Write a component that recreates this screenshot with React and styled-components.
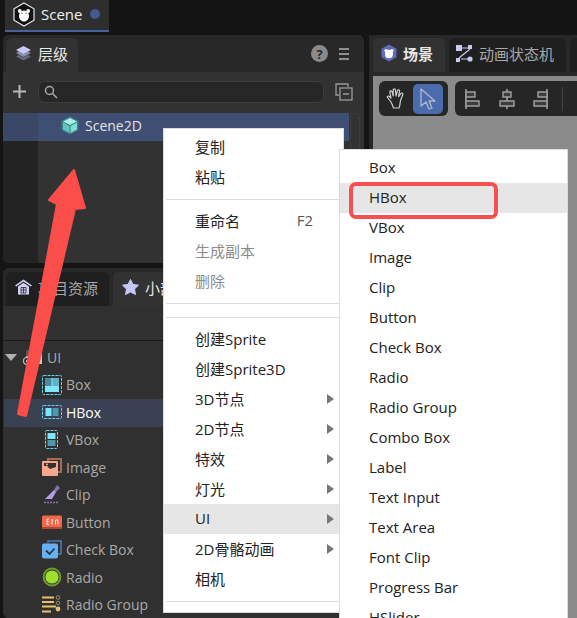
import styled, { createGlobalStyle } from "styled-components";

const Global = createGlobalStyle`
    html, body { margin: 0; padding: 0; background: #141414; overflow: hidden; }
    body { font-family: "Open Sans", "Noto Sans CJK SC", sans-serif; }
`;

const Page = styled.div`
    position: relative;
    width: 577px;
    height: 618px;
    overflow: hidden;
    background: #141414;
`;
const TopBar = styled.div`
    display: flex;
    height: 35px;
    padding-left: 5px;
`;
const SceneTab = styled.div`
    width: 104px;
    height: 32px;
    box-sizing: border-box;
    display: flex;
    align-items: center;
    padding: 0 0 2px 8px;
    gap: 6px;
    background: #2e2e2e;
    border-bottom: 2px solid #46629a;
    color: #f0f0f0;
    font-size: 15px;
`;
const Dot = styled.span`
    width: 10px;
    height: 10px;
    margin-left: 2px;
    border-radius: 50%;
    background: #45598f;
`;
const Columns = styled.div`
    display: flex;
    height: 583px;
    padding-left: 3px;
    gap: 5px;
`;
const LeftColumn = styled.div`
    width: 361px;
    display: flex;
    flex-direction: column;
    gap: 5px;
`;
const Panel = styled.div`
    background: #303030;
    border-radius: 6px;
    overflow: hidden;
    height: ${(p) => p.$h}px;
    display: flex;
    flex-direction: column;
    flex: ${(p) => (p.$h ? "none" : 1)};
`;
const TabStrip = styled.div`
    height: ${(p) => p.$h || 37}px;
    padding-left: ${(p) => p.$pad}px;
    display: flex;
    align-items: flex-end;
    gap: 4px;
    background: #282828;
    flex: none;
`;
const Tab = styled.div`
    height: 34px;
    box-sizing: border-box;
    width: ${(p) => p.$w}px;
    padding: 0 0 4px ${(p) => p.$pad || 8}px;
    display: flex;
    align-items: center;
    gap: 6px;
    border-radius: 6px 6px 0 0;
    background: ${(p) => (p.$active ? "#323232" : "#1f1f1f")};
    color: ${(p) => (p.$active ? "#e8e8e8" : "#a8a8a8")};
    font-size: 15px;
    font-weight: ${(p) => (p.$bold ? 700 : 400)};
    white-space: nowrap;
    overflow: hidden;
    flex: none;
`;
const TabEnd = styled.div`
    margin-left: auto;
    height: 37px;
    display: flex;
    align-items: center;
    gap: 11px;
    padding-right: 15px;
`;
const Help = styled.span`
    width: 17px;
    height: 17px;
    border-radius: 50%;
    background: #8a8a8a;
    color: #2b2b2b;
    font-size: 13px;
    font-weight: 700;
    display: flex;
    align-items: center;
    justify-content: center;
`;
const SearchRow = styled.div`
    height: 41px;
    box-sizing: border-box;
    display: flex;
    align-items: center;
    background: #323232;
    padding: 0 9px 2px 9px;
    flex: none;
`;
const SearchBox = styled.div`
    width: 286px;
    height: 22px;
    margin-left: 11px;
    margin-right: 11px;
    box-sizing: border-box;
    border: 1px solid #3d3d3d;
    border-radius: 7px;
    background: #272727;
    display: flex;
    align-items: center;
    padding-left: 5px;
`;
const HierarchyBody = styled.div`
    flex: 1;
    display: grid;
    grid-template-columns: 35px 1fr;
    background: #323232;
`;
const Gutter = styled.div`
    background: #232323;
`;
const SelectedArea = styled.div`
    display: flex;
    align-items: flex-start;
    gap: 1px;
`;
const SelectedRow = styled.div`
    position: relative;
    flex: 1;
    height: 28px;
    box-sizing: border-box;
    margin-left: -35px;
    padding: 0 0 3px 57px;
    display: flex;
    align-items: center;
    gap: 5px;
    background: linear-gradient(90deg, #3a4766 35px, #3f4e73 35px);
    color: #e4e4e4;
    font-size: 14px;
`;
const ScrollTrack = styled.div`
    width: 8px;
    height: 100px;
    margin-right: 4px;
    border: 1px solid #3c3c3c;
    border-radius: 4px;
`;
const AssetHeader = styled.div`
    height: 34px;
    background: #303030;
    border-bottom: 1px solid #1c1c1c;
    flex: none;
`;
const Tree = styled.div`
    flex: 1;
    background: #303030;
    padding-top: 3px;
`;
const TreeRow = styled.div`
    height: 27.5px;
    box-sizing: border-box;
    display: flex;
    align-items: center;
    margin-left: 1px;
    padding: 0 0 1px ${(p) => p.$indent}px;
    gap: 4px;
    font-size: 14px;
    color: ${(p) => (p.$active ? "#ffffff" : "#a9a9a9")};
    font-weight: ${(p) => (p.$active ? 500 : 400)};
    background: ${(p) => (p.$active ? "#394152" : "transparent")};
`;
const Caret = styled.span`
    width: 0;
    height: 0;
    margin-right: 1px;
    border-left: 6px solid transparent;
    border-right: 6px solid transparent;
    border-top: 7px solid #b0b0b0;
`;
const RightColumn = styled.div`
    flex: 1;
    min-width: 0;
    display: flex;
    flex-direction: column;
    background: #282828;
    border-radius: 6px 0 0 0;
`;
const Viewport = styled.div`
    flex: 1;
    margin: 4px 0 0 4px;
    background: #8a8a8a;
    padding: 5px 0 0 6px;
    display: flex;
    gap: 7px;
    align-items: flex-start;
`;
const ToolGroup = styled.div`
    height: 35px;
    box-sizing: border-box;
    display: flex;
    align-items: center;
    padding: 2px ${(p) => (p.$spread ? 3 : 2)}px;
    gap: ${(p) => (p.$spread ? 3.5 : 2)}px;
    background: #262626;
    border-radius: 6px;
    flex: none;
    width: ${(p) => p.$w}px;
`;
const ToolButton = styled.div`
    width: 30px;
    height: 30px;
    display: flex;
    align-items: center;
    justify-content: center;
    border-radius: 5px;
    background: ${(p) => (p.$on ? "#4a6bad" : "transparent")};
`;
const ToolRule = styled.span`
    width: 1px;
    height: 24px;
    margin-left: 3px;
    background: #444;
`;
const Menu = styled.div`
    position: absolute;
    left: ${(p) => p.$x}px;
    top: ${(p) => p.$y}px;
    width: ${(p) => p.$w}px;
    box-sizing: border-box;
    display: flex;
    flex-direction: column;
    padding: 3px 0 4px;
    background: #ffffff;
    border: 1px solid #dcdcdc;
    color: #222;
    font-size: 15px;
`;
const MenuRow = styled.div`
    height: 30px;
    flex: none;
    box-sizing: border-box;
    display: flex;
    align-items: center;
    justify-content: space-between;
    padding: 0 9px 2px ${(p) => p.$pad}px;
    background: ${(p) => (p.$hover ? "#e6e6e6" : "transparent")};
    color: ${(p) => (p.$off ? "#8c8c8c" : "#222")};
`;
const Sep = styled.div`
    height: 1px;
    flex: none;
    margin: 7px 0 6px 2px;
    background: #dcdcdc;
`;
const Arrowhead = styled.span`
    width: 0;
    height: 0;
    margin-top: 2px;
    border-top: 5px solid transparent;
    border-bottom: 5px solid transparent;
    border-left: 7px solid #777;
`;
const Hint = styled.span`
    color: #555;
    margin-right: 21px;
`;
const RedBox = styled.div`
    position: absolute;
    left: 349px;
    top: 182px;
    width: 149px;
    height: 37px;
    box-sizing: border-box;
    border: 4px solid #f85050;
    border-radius: 7px;
`;
const ArrowArt = styled.svg`
    position: absolute;
    left: 0;
    top: 150px;
`;

const LogoIcon = () => (
    <svg width="22" height="25" viewBox="0 0 22 25">
        <path d="M11 1 L21 6.8 V18.2 L11 24 L1 18.2 V6.8 Z" fill="#111" stroke="#e8e8e8" strokeWidth="1.2" />
        <circle cx="6.8" cy="9" r="1.9" fill="#fff" />
        <circle cx="15.2" cy="9" r="1.9" fill="#fff" />
        <ellipse cx="11" cy="14" rx="5" ry="5.6" fill="#fff" />
        <circle cx="9" cy="11" r="0.6" fill="#111" />
        <circle cx="13" cy="11" r="0.6" fill="#111" />
    </svg>
);
const LayersIcon = () => (
    <svg width="17" height="17" viewBox="0 0 17 17">
        <path d="M1 11.5 L8.5 15.5 L16 11.5 L13 10 L8.5 12.5 L4 10 Z" fill="#666a80" />
        <path d="M1 8 L8.5 12 L16 8 L13 6.5 L8.5 9 L4 6.5 Z" fill="#8d90b0" />
        <path d="M8.5 1 L16 5 L8.5 9 L1 5 Z" fill="#c6c9f5" />
    </svg>
);
const PlusIcon = () => (
    <svg width="15" height="15" viewBox="0 0 15 15">
        <path d="M7.5 1 V14 M1 7.5 H14" stroke="#b8b8b8" strokeWidth="2" />
    </svg>
);
const SearchIcon = () => (
    <svg width="14" height="14" viewBox="0 0 14 14" fill="none" stroke="#a8a8a8" strokeWidth="1.5">
        <circle cx="5.5" cy="5.5" r="4" />
        <path d="M8.5 8.5 L13 13" />
    </svg>
);
const CopyIcon = () => (
    <svg width="18" height="18" viewBox="0 0 18 18" fill="none" stroke="#9a9a9a" strokeWidth="1.3">
        <path d="M4 12 H1 V1 H13 V4" />
        <rect x="5" y="5" width="12" height="12" />
        <path d="M8 11 H14" />
    </svg>
);
const MenuLines = () => (
    <svg width="10" height="12" viewBox="0 0 10 12">
        <path d="M0 1 H10 M0 6 H10 M0 11 H10" stroke="#b0b0b0" strokeWidth="1.4" />
    </svg>
);
const CubeIcon = () => (
    <svg width="20" height="19" viewBox="0 0 20 19">
        <path d="M10 0.5 L18.5 5 V14 L10 18.5 L1.5 14 V5 Z" fill="#3f7f86" />
        <path d="M10 2 L17 5.5 L10 9 L3 5.5 Z" fill="#a8efe8" />
        <path d="M3 6.5 L9.5 10 V17 L3 13.5 Z" fill="#5fc6c0" />
        <path d="M17 6.5 L10.5 10 V17 L17 13.5 Z" fill="#7fdcd6" />
    </svg>
);
const SceneBadge = () => (
    <svg width="16" height="18" viewBox="0 0 16 18">
        <path d="M8 0.5 L15.5 4.7 V13.3 L8 17.5 L0.5 13.3 V4.7 Z" fill="#5f6db8" />
        <circle cx="5" cy="6.5" r="1.6" fill="#fff" />
        <circle cx="11" cy="6.5" r="1.6" fill="#fff" />
        <ellipse cx="8" cy="10" rx="4" ry="4.2" fill="#fff" />
    </svg>
);
const GraphIcon = () => (
    <svg width="17" height="17" viewBox="0 0 17 17">
        <path d="M5 3 H12 M14 4 L3 13 M5 14 H12" stroke="#c8cbf0" strokeWidth="1.2" fill="none" />
        <rect x="0" y="0" width="6" height="6" fill="#c8cbf0" />
        <rect x="12" y="0" width="4" height="4" fill="#c8cbf0" />
        <rect x="0" y="13" width="4" height="4" fill="#c8cbf0" />
        <circle cx="14" cy="14" r="2.6" fill="#c8cbf0" />
    </svg>
);
const HandIcon = () => (
    <svg width="20" height="21" viewBox="0 0 20 21" fill="none" stroke="#cfcfcf" strokeWidth="1.2" strokeLinejoin="round">
        <path d="M5 14 L1.5 9.5 C0.8 8.3 2.6 7.5 3.4 8.5 L5 10 L3.8 4 C3.6 2.6 5.6 2.3 6 3.6 L7.2 8 L7.2 2 C7.2 0.6 9.4 0.6 9.5 2 L10 8 L11.5 2.6 C12 1.3 13.8 1.8 13.6 3.2 L12.6 8.6 L15 5.4 C15.9 4.5 17.4 5.4 16.8 6.6 L14.4 13 C14 16 14 18 13 20 H7.5 C6.8 18 6 16 5 14 Z" />
    </svg>
);
const PointerIcon = () => (
    <svg width="16" height="22" viewBox="0 0 16 22" fill="none" stroke="#b4b9c6" strokeWidth="1.3" strokeLinejoin="round">
        <path d="M1 1 L15 13 L9 13 L12 20 L9 21 L6 14 L1 18 Z" />
    </svg>
);
const AlignIcon = ({ line, boxes }) => (
    <svg width="16" height="20" viewBox="0 0 16 20">
        <path d={line} stroke="#a0a0a0" strokeWidth="1.6" fill="none" />
        <path d={boxes} stroke="#a0a0a0" strokeWidth="1.4" fill="#3c3c3c" />
    </svg>
);
const HomeIcon = () => (
    <svg width="17" height="16" viewBox="0 0 17 16">
        <path d="M8.5 0.5 L17 6.5 L15.8 7.6 L8.5 2.6 L1.2 7.6 L0 6.5 Z" fill="#cfd2f5" />
        <path d="M3 7.5 L8.5 3.8 L14 7.5 V15.5 H3 Z" fill="#cfd2f5" />
        <path d="M6 8.5 H11 V14 H6 Z M8.5 8.5 V14 M6 11 H11" stroke="#333" strokeWidth="0.9" fill="none" />
    </svg>
);
const StarIcon = () => (
    <svg width="17" height="16" viewBox="0 0 17 16">
        <path d="M8.5 0.5 L11 5.4 L16.5 6.2 L12.5 10 L13.5 15.5 L8.5 13 L3.5 15.5 L4.5 10 L0.5 6.2 L6 5.4 Z" fill="#c4c7f8" stroke="#c4c7f8" strokeLinejoin="round" />
    </svg>
);
const FolderIcon = () => (
    <svg width="21" height="17" viewBox="0 0 21 17">
        <rect x="4" y="1" width="16" height="14" fill="#c9c9c9" />
        <rect x="4" y="1" width="7" height="6" fill="#555" />
        <circle cx="5" cy="12" r="3.6" fill="#303030" stroke="#bbb" strokeWidth="1.2" />
        <circle cx="5" cy="12" r="1.2" fill="#bbb" />
    </svg>
);

const BoxIcon = () => (
    <svg width="20" height="20" viewBox="0 0 20 20">
        <rect x="0.5" y="0.5" width="19" height="19" rx="1" fill="none" stroke="#67d0e6" strokeDasharray="3 1" />
        <rect x="3" y="3" width="14" height="14" fill="#7ee6fa" />
        <rect x="3" y="3" width="6.5" height="8" fill="#4f8a9c" />
        <rect x="10.5" y="3" width="6.5" height="8" fill="#5fb4c8" />
    </svg>
);
const HBoxIcon = () => (
    <svg width="20" height="14" viewBox="0 0 20 14">
        <rect x="0.5" y="0.5" width="19" height="13" rx="1" fill="none" stroke="#67d0e6" strokeDasharray="3 1" />
        <rect x="3.5" y="3" width="6" height="8" fill="#7ee6fa" />
        <rect x="10.5" y="3" width="6" height="8" fill="#4f97ae" />
    </svg>
);
const VBoxIcon = () => (
    <svg width="20" height="19" viewBox="0 0 20 19">
        <rect x="3.5" y="0.5" width="12" height="18" rx="1" fill="none" stroke="#67d0e6" strokeDasharray="3 1" />
        <rect x="5.5" y="3" width="8" height="6" fill="#7ee6fa" />
        <rect x="5.5" y="10" width="8" height="6" fill="#4f97ae" />
    </svg>
);
const ImageIcon = () => (
    <svg width="20" height="19" viewBox="0 0 20 19">
        <path d="M6 3 V1 H19 V14 H16" fill="none" stroke="#a86a58" strokeWidth="2" />
        <rect x="0" y="3" width="16" height="15" rx="1" fill="#f7a78f" />
        <path d="M2 5 H14 V9 L8 11 L5 8 H2 Z" fill="#3a2e2c" />
        <circle cx="5" cy="6.5" r="1" fill="#f7a78f" />
    </svg>
);
const ClipIcon = () => (
    <svg width="20" height="19" viewBox="0 0 20 19">
        <path d="M15 0 L18 3 L14 7 L12 5 Z" fill="#8674b4" />
        <path d="M12 5 L14 7 L10 14 H3 Z" fill="#b4a0ea" />
        <path d="M2 17.5 H17" stroke="#8674b4" strokeWidth="1.6" strokeDasharray="2 1" />
    </svg>
);
const ButtonIcon = () => (
    <svg width="20" height="14" viewBox="0 0 20 14">
        <rect x="0" y="0.5" width="20" height="13" rx="1.5" fill="#f2664a" />
        <rect x="0" y="12" width="20" height="2" fill="#b04a36" />
        <path d="M5 4 V9.5 M5 4 H7 M5 6.7 H7 M5 9.5 H7 M10 4 V9.5 M9 5 H11.5 M13.5 9.5 V5 H16 V9.5" stroke="#ffe4dc" strokeWidth="1" fill="none" />
    </svg>
);
const CheckIcon = () => (
    <svg width="20" height="19" viewBox="0 0 20 19">
        <path d="M6 3 V1 H19 V14 H16" fill="none" stroke="#4b7ab0" strokeWidth="1.6" />
        <rect x="0" y="3.5" width="16" height="15" rx="2" fill="#69b0f2" />
        <path d="M4 10.5 L7.5 14 L12.5 8.5" fill="none" stroke="#24344a" strokeWidth="1.8" />
    </svg>
);
const RadioIcon = () => (
    <svg width="20" height="20" viewBox="0 0 20 20">
        <circle cx="10" cy="10" r="8.4" fill="none" stroke="#6f9a2e" strokeWidth="2" />
        <circle cx="10" cy="10" r="6.6" fill="#9ee02f" />
    </svg>
);
const RadioGroupIcon = () => (
    <svg width="20" height="20" viewBox="0 0 20 20">
        <path d="M0 2.5 H12 M0 7 H12 M0 11.5 H14 M0 16.5 H9" stroke="#e8c070" strokeWidth="2" />
        <circle cx="16" cy="2.5" r="1.8" fill="none" stroke="#a08c60" />
        <circle cx="16" cy="8" r="1.8" fill="none" stroke="#a08c60" />
        <circle cx="16" cy="14" r="2.4" fill="#e8c070" />
    </svg>
);

const treeItems = [
    ["Box", BoxIcon],
    ["HBox", HBoxIcon, true],
    ["VBox", VBoxIcon],
    ["Image", ImageIcon],
    ["Clip", ClipIcon],
    ["Button", ButtonIcon],
    ["Check Box", CheckIcon],
    ["Radio", RadioIcon],
    ["Radio Group", RadioGroupIcon],
];

const uiItems = ["Box", "HBox", "VBox", "Image", "Clip", "Button", "Check Box", "Radio", "Radio Group", "Combo Box", "Label", "Text Input", "Text Area", "Font Clip", "Progress Bar", "HSlider"];

const submenu = [
    ["3D节点"],
    ["2D节点"],
    ["特效"],
    ["灯光"],
    ["UI", true],
    ["2D骨骼动画"],
];

const App = () => {
    return (
        <Page>
            <Global />
            <TopBar>
                <SceneTab>
                    <LogoIcon />
                    Scene
                    <Dot />
                </SceneTab>
            </TopBar>
            <Columns>
                <LeftColumn>
                    <Panel $h={228}>
                        <TabStrip $pad={3}>
                            <Tab $w={72} $active $pad={9}><LayersIcon />层级</Tab>
                            <TabEnd><Help>?</Help><MenuLines /></TabEnd>
                        </TabStrip>
                        <SearchRow>
                            <PlusIcon />
                            <SearchBox><SearchIcon /></SearchBox>
                            <CopyIcon />
                        </SearchRow>
                        <HierarchyBody>
                            <Gutter />
                            <SelectedArea>
                                <SelectedRow><CubeIcon />Scene2D</SelectedRow>
                                <ScrollTrack />
                            </SelectedArea>
                        </HierarchyBody>
                    </Panel>
                    <Panel>
                        <TabStrip $pad={3} $h={38}>
                            <Tab $w={103} $pad={9}><HomeIcon />项目资源</Tab>
                            <Tab $w={120} $active $pad={9}><StarIcon />小部件</Tab>
                        </TabStrip>
                        <AssetHeader />
                        <Tree>
                            <TreeRow $indent={1}><Caret /><FolderIcon />UI</TreeRow>
                            {treeItems.map(([name, Icon, active]) => (
                                <TreeRow key={name} $indent={38} $active={active}><Icon />{name}</TreeRow>
                            ))}
                        </Tree>
                    </Panel>
                </LeftColumn>
                <RightColumn>
                    <TabStrip $pad={4}>
                        <Tab $w={72} $active $bold><SceneBadge />场景</Tab>
                        <Tab $w={117} $pad={7}><GraphIcon />动画状态机</Tab>
                        <Tab $w={20} />
                    </TabStrip>
                    <Viewport>
                        <ToolGroup $w={69}>
                            <ToolButton><HandIcon /></ToolButton>
                            <ToolButton $on><PointerIcon /></ToolButton>
                        </ToolGroup>
                        <ToolGroup $w={140} $spread>
                            <ToolButton><AlignIcon line="M1 0 V20" boxes="M1 3 H10 V8 H1 Z M1 12 H14 V17 H1 Z" /></ToolButton>
                            <ToolButton><AlignIcon line="M8 0 V20" boxes="M4 3 H12 V8 H4 Z M1 12 H15 V17 H1 Z" /></ToolButton>
                            <ToolButton><AlignIcon line="M15 0 V20" boxes="M6 3 H15 V8 H6 Z M2 12 H15 V17 H2 Z" /></ToolButton>
                            <ToolRule />
                        </ToolGroup>
                    </Viewport>
                </RightColumn>
            </Columns>

            <Menu $x={163} $y={128} $w={181}>
                <MenuRow $pad={31}>复制</MenuRow>
                <MenuRow $pad={31}>粘贴</MenuRow>
                <Sep />
                <MenuRow $pad={31}>重命名<Hint>F2</Hint></MenuRow>
                <MenuRow $pad={31} $off>生成副本</MenuRow>
                <MenuRow $pad={31} $off>删除</MenuRow>
                <Sep />
                <Sep />
                <MenuRow $pad={31}>创建Sprite</MenuRow>
                <MenuRow $pad={31}>创建Sprite3D</MenuRow>
                {submenu.map(([label, hover]) => (
                    <MenuRow key={label} $pad={31} $hover={hover}>{label}<Arrowhead /></MenuRow>
                ))}
                <MenuRow $pad={31}>相机</MenuRow>
                <Sep />
            </Menu>
            <Menu $x={339} $y={149} $w={229}>
                {uiItems.map((item) => (
                    <MenuRow key={item} $pad={29} $hover={item === "HBox"}>{item}</MenuRow>
                ))}
            </Menu>
            <RedBox />
            <ArrowArt width="100" height="290" viewBox="0 0 100 290">
                <path d="M74 20 L85 58 L75 59 L26 266 L18 264 L57 54 L49 50 Z" fill="#fb4d4a" stroke="#fb4d4a" strokeWidth="2" strokeLinejoin="round" />
            </ArrowArt>
        </Page>
    );
};

export default App;
